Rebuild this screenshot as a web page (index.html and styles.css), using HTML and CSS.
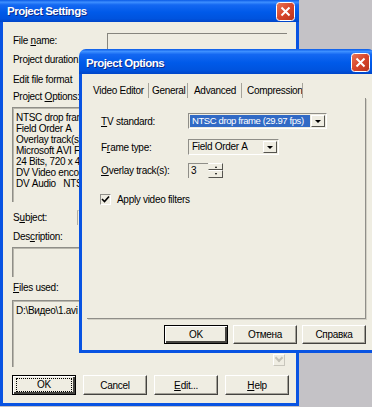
FILE: index.html
```html
<!DOCTYPE html>
<html>
<head>
  <title>Project Settings</title>
  <link rel="stylesheet" href="styles.css">
</head>
<body>
  <div class="desktop">

    <!-- ventana de fondo -->
    <div class="window settings">
      <div class="titlebar">
        <span class="title">Project Settings</span>
        <span class="close">
          <svg width="19" height="19" viewBox="0 0 19 19">
            <defs>
              <linearGradient id="red1" x1="0" y1="0" x2="1" y2="1">
                <stop offset="0" stop-color="#e9785a"/>
                <stop offset="0.5" stop-color="#d8452a"/>
                <stop offset="1" stop-color="#b8331c"/>
              </linearGradient>
            </defs>
            <rect x="0.5" y="0.5" width="18" height="18" rx="3" fill="url(#red1)" stroke="#ffffff"/>
            <path d="M5.5 5.5 L13.5 13.5 M13.5 5.5 L5.5 13.5" stroke="#ffffff" stroke-width="2"/>
          </svg>
        </span>
      </div>
      <div class="body">
        <div class="name-row">
          <span class="label name-label">File <u>n</u>ame:</span>
          <span class="field name-field"></span>
        </div>
        <div class="line tall">Project duration:</div>
        <div class="line tall">Edit file format</div>
        <div class="line">Project <u>O</u>ptions:</div>
        <div class="box info">
          NTSC drop frame (29.97 fps)<br>
          Field Order A<br>
          Overlay track(s): 3<br>
          Microsoft AVI File<br>
          24 Bits, 720 x 480<br>
          DV Video encoder<br>
          DV Audio&nbsp;&nbsp;&nbsp;NTSC
        </div>
        <div class="subject-row">
          <span class="label subject-label">S<u>u</u>bject:</span>
          <span class="field subject-field"></span>
        </div>
        <div class="line desc-label">Des<u>c</u>ription:</div>
        <div class="box desc"></div>
        <div class="line files-label"><u>F</u>iles used:</div>
        <div class="box files">
          <div class="files-text">D:\Видео\1.avi</div>
          <div class="scroll">
            <span class="scroll-btn"><span class="tri-up"></span></span>
            <span class="scroll-btn"><span class="chev"></span></span>
          </div>
        </div>
        <div class="buttons">
          <button class="btn default"><span class="focus">OK</span></button>
          <button class="btn">Cancel</button>
          <button class="btn"><u>E</u>dit...</button>
          <button class="btn"><u>H</u>elp</button>
        </div>
      </div>
    </div>

    <!-- ventana de opciones, encima -->
    <div class="window options">
      <div class="titlebar">
        <span class="title">Project Options</span>
        <span class="close">
          <svg width="19" height="19" viewBox="0 0 19 19">
            <defs>
              <linearGradient id="red2" x1="0" y1="0" x2="1" y2="1">
                <stop offset="0" stop-color="#e9785a"/>
                <stop offset="0.5" stop-color="#d8452a"/>
                <stop offset="1" stop-color="#b8331c"/>
              </linearGradient>
            </defs>
            <rect x="0.5" y="0.5" width="18" height="18" rx="3" fill="url(#red2)" stroke="#ffffff"/>
            <path d="M5.5 5.5 L13.5 13.5 M13.5 5.5 L5.5 13.5" stroke="#ffffff" stroke-width="2"/>
          </svg>
        </span>
      </div>
      <div class="body">
        <div class="tabs">
          <span class="tab tab-video">Video Editor</span>
          <span class="tab tab-general">General</span>
          <span class="tab tab-advanced">Advanced</span>
          <span class="tab tab-compression">Compression</span>
        </div>
        <div class="panel">
          <div class="prop-row">
            <span class="prop-label"><u>T</u>V standard:</span>
            <span class="select select-tv">
              <span class="select-text selected">NTSC drop frame (29.97 fps)</span>
              <span class="select-btn"><span class="tri-down"></span></span>
            </span>
          </div>
          <div class="prop-row row-frame">
            <span class="prop-label">F<u>r</u>ame type:</span>
            <span class="select select-frame">
              <span class="select-text">Field Order A</span>
              <span class="select-btn"><span class="tri-down"></span></span>
            </span>
          </div>
          <div class="prop-row row-overlay">
            <span class="prop-label"><u>O</u>verlay track(s):</span>
            <span class="spin">
              <span class="spin-text">3</span>
              <span class="spin-btns">
                <span class="spin-btn"><span class="tri-up small"></span></span>
                <span class="spin-btn"><span class="tri-down small"></span></span>
              </span>
            </span>
          </div>
          <div class="check-row">
            <span class="checkbox">
              <svg width="9" height="9" viewBox="0 0 9 9">
                <path d="M1 4 L3.5 6.5 L8 1.5" fill="none" stroke="#000000" stroke-width="1.6"/>
              </svg>
            </span>
            <span>Apply video filters</span>
          </div>
        </div>
        <div class="buttons dialog-buttons">
          <button class="btn default">OK</button>
          <button class="btn">Отмена</button>
          <button class="btn">Справка</button>
        </div>
      </div>
    </div>

  </div>
</body>
</html>
```

FILE: styles.css
```css
body {
  margin: 0;
  background-color: #c4c2c6;
  font-family: "Liberation Sans", Arial, sans-serif;
  font-size: 10px;
  letter-spacing: -0.3px;
  color: #000000;
  font-kerning: none;
}

u {
  letter-spacing: 0;
}

.desktop {
  position: relative;
  width: 372px;
  height: 407px;
  overflow: hidden;
}

/* ventanas */
.window {
  position: absolute;
  display: flex;
  flex-direction: column;
}

.settings {
  left: 0;
  top: 0;
  width: 299px;
  height: 406px;
}

.options {
  left: 79px;
  top: 49px;
  width: 296px;
  height: 304px;
}

.titlebar {
  display: flex;
  align-items: center;
  justify-content: space-between;
  padding: 0 4px 0 7px;
  background: linear-gradient(#0a5ae6 0%, #3d8fff 10%, #1468f2 22%, #005ae9 55%, #0053de 85%, #0045c8 100%);
  color: #ffffff;
}

.settings .titlebar {
  height: 22px;
}

.options .titlebar {
  height: 25px;
  padding: 2px 5px 0 7px;
  border-radius: 7px 7px 0 0;
  box-sizing: border-box;
}

.title {
  font-weight: bold;
  font-size: 11.5px;
  letter-spacing: -0.5px;
  text-shadow: 1px 1px 0 #0c2a8a;
}

.close {
  display: flex;
}

.body {
  flex: 1;
  background-color: #efede2;
  border: 3px solid #0853e2;
  border-top: none;
}

.settings .body {
  padding: 11px 9px 0 9px;
}

.options .body {
  padding: 9px 6px 0 5px;
}

/* filas de la ventana de fondo */
.line {
  height: 14px;
  line-height: 14px;
  padding-left: 1px;
  white-space: nowrap;
}

.line.tall {
  height: 20px;
  line-height: 20px;
}

.name-row {
  display: flex;
  height: 17px;
}

.label {
  padding-left: 1px;
  line-height: 16px;
  white-space: nowrap;
}

.name-label {
  width: 94px;
}

.field {
  display: block;
  flex: 1;
  border-top: 1px solid #86857e;
  border-left: 1px solid #86857e;
  box-sizing: border-box;
}

.name-field {
  height: 17px;
}

.subject-row {
  display: flex;
  height: 15px;
  margin-top: 8px;
}

.subject-label {
  width: 64px;
  line-height: 15px;
}

.subject-field {
  height: 15px;
  border-top-color: #c9c7bc;
  border-left-color: #b0aea5;
}

.box {
  box-sizing: border-box;
  border-top: 1px solid #8f8e88;
  border-left: 1px solid #8f8e88;
  box-shadow: inset 1px 1px 0 #b9b7ad;
}

.info {
  margin-top: 3px;
  height: 95px;
  padding: 4px 0 0 3px;
  line-height: 11px;
  white-space: nowrap;
  overflow: hidden;
}

.desc-label {
  margin-top: 5px;
}

.desc {
  margin-top: 3px;
  height: 30px;
}

.files-label {
  margin-top: 4px;
}

.files {
  display: flex;
  margin-top: 5px;
  height: 67px;
}

.files-text {
  flex: 1;
  padding: 4px 0 0 3px;
}

.scroll {
  width: 13px;
  display: flex;
  flex-direction: column;
  justify-content: space-between;
  padding: 0 1px 1px 0;
}

.scroll-btn {
  width: 12px;
  height: 12px;
  display: flex;
  align-items: center;
  justify-content: center;
  box-sizing: border-box;
  border: 1px solid #ffffff;
  border-right-color: #c8c6bc;
  border-bottom-color: #c8c6bc;
}

.chev {
  width: 4px;
  height: 4px;
  border-right: 2px solid #c3c1b6;
  border-bottom: 2px solid #c3c1b6;
  transform: translateY(-2px) rotate(45deg);
}

/* botones */
.buttons {
  display: flex;
  justify-content: space-between;
  margin-top: 8px;
  width: 277px;
  height: 20px;
}

.btn {
  width: 64px;
  height: 20px;
  padding: 0;
  background-color: #efede2;
  font-family: inherit;
  font-size: 10px;
  letter-spacing: inherit;
  color: #000000;
  border: 1px solid;
  border-color: #ffffff #44433f #44433f #ffffff;
  box-shadow: inset -1px -1px 0 #a3a198;
}

.btn.default {
  border: 1px solid #000000;
  box-shadow: inset 1px 1px 0 #ffffff, inset -2px -2px 0 #44433f;
}

.focus {
  display: block;
  margin: 0 3px;
  border: 1px dotted #000000;
  line-height: 12px;
}

.dialog-buttons {
  justify-content: flex-end;
  gap: 5px;
  width: auto;
  margin-top: 6px;
  height: 19px;
}

.dialog-buttons .btn {
  height: 19px;
}

/* pestañas */
.tabs {
  display: flex;
  height: 15px;
  padding-left: 1px;
}

.tab {
  line-height: 15px;
  border-right: 1px solid #a6a49b;
  box-sizing: border-box;
  white-space: nowrap;
  overflow: hidden;
}

.tab-video {
  width: 61px;
  padding-left: 5px;
}

.tab-general {
  width: 39px;
  padding-left: 3px;
}

.tab-advanced {
  width: 54px;
  padding-left: 6px;
}

.tab-compression {
  width: 61px;
  padding-left: 5px;
}

.panel {
  box-sizing: border-box;
  height: 221px;
  padding: 15px 0 0 14px;
  border-right: 1px solid #8f8e88;
  border-bottom: 1px solid #8f8e88;
  box-shadow: 1px 1px 0 #d2d0c5;
}

.prop-row {
  display: flex;
  align-items: center;
  height: 16px;
}

.row-frame {
  margin-top: 10px;
}

.row-overlay {
  margin-top: 8px;
  height: 15px;
}

.prop-label {
  width: 87px;
  white-space: nowrap;
}

.select {
  display: flex;
  height: 16px;
  box-sizing: border-box;
  border: 1px solid;
  border-color: #8f8e88 #ffffff #ffffff #8f8e88;
  padding: 1px;
}

.select-tv {
  width: 139px;
}

.select-frame {
  width: 91px;
}

.select-text {
  flex: 1;
  line-height: 12px;
  padding-left: 2px;
  white-space: nowrap;
  overflow: hidden;
}

.select-text.selected {
  background-color: #316ac5;
  color: #ffffff;
  margin-right: 1px;
  font-size: 9.5px;
  letter-spacing: -0.4px;
}

.select-btn,
.spin-btn {
  display: flex;
  align-items: center;
  justify-content: center;
  box-sizing: border-box;
  background-color: #efede2;
  border: 1px solid;
  border-color: #ffffff #55544f #55544f #ffffff;
}

.select-btn {
  width: 14px;
  height: 12px;
}

.tri-down {
  width: 0;
  height: 0;
  border-left: 3px solid transparent;
  border-right: 3px solid transparent;
  border-top: 3px solid #000000;
}

.tri-up {
  width: 0;
  height: 0;
  border-left: 3px solid transparent;
  border-right: 3px solid transparent;
  border-bottom: 3px solid #c3c1b6;
}

.tri-up.small {
  border-left-width: 1px;
  border-right-width: 1px;
  border-bottom: 2px solid #000000;
}

.tri-down.small {
  border-left-width: 1px;
  border-right-width: 1px;
  border-top-width: 2px;
}

.spin {
  display: flex;
  width: 35px;
  height: 15px;
}

.spin-text {
  width: 20px;
  box-sizing: border-box;
  border-top: 1px solid #8f8e88;
  border-left: 1px solid #8f8e88;
  padding-left: 2px;
  line-height: 13px;
}

.spin-btns {
  display: flex;
  flex-direction: column;
  width: 15px;
}

.spin-btn {
  height: 7px;
  border-left-color: #efede2;
}

.spin-btn + .spin-btn {
  height: 8px;
}

.check-row {
  display: flex;
  align-items: center;
  gap: 6px;
  margin-top: 16px;
  margin-left: -1px;
  height: 11px;
}

.checkbox {
  display: flex;
  align-items: center;
  justify-content: center;
  width: 11px;
  height: 11px;
  box-sizing: border-box;
  border: 1px solid;
  border-color: #8f8e88 #ffffff #ffffff #8f8e88;
}
```
